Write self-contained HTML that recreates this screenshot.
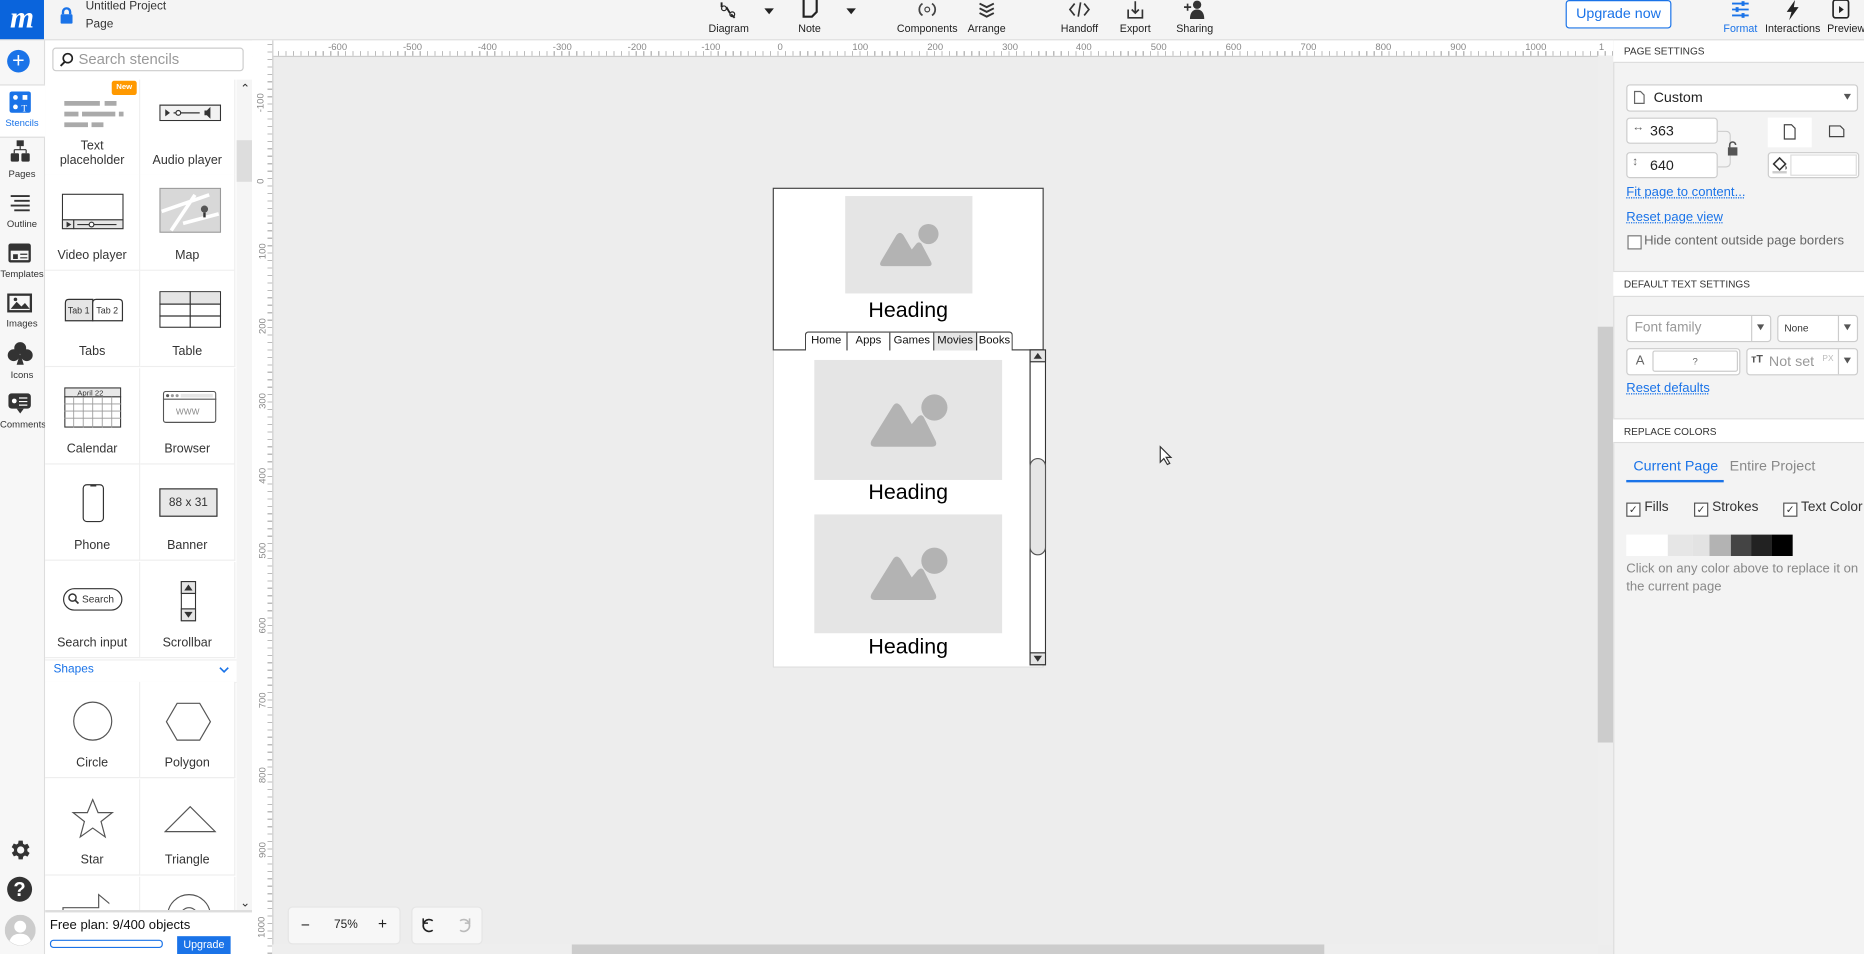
<!DOCTYPE html>
<html><head><meta charset="utf-8"><style>
html,body{margin:0;padding:0;width:1864px;height:954px;overflow:hidden;background:#eee}
#w{position:absolute;left:0;top:0;width:1568px;height:803px;transform:scale(1.18878,1.18804);transform-origin:0 0;font-family:"Liberation Sans",sans-serif;color:#333;overflow:hidden;background:#ededed}
.a{position:absolute}
.lbl{font-size:9px;color:#222;text-align:center;width:80px}
.cell{position:absolute;width:80px;height:81px;background:#fff;border-right:1px solid #eee;border-bottom:1px solid #eee;box-sizing:border-box}
.cell .t{position:absolute;bottom:6px;left:0;right:0;text-align:center;font-size:10.5px;color:#333;line-height:12px}
.rail{position:absolute;left:0;width:37px;text-align:center;font-size:8px;color:#333}
.hd{position:absolute;left:1357px;width:211px;background:#fff;font-size:8.5px;color:#333;padding-left:9px;box-sizing:border-box;border-top:1px solid #ddd;border-bottom:1px solid #ddd}
.in{position:absolute;background:#fff;border:1px solid #ccc;border-radius:3px;box-sizing:border-box;font-size:11px}
.lnk{position:absolute;left:1368px;font-size:11px;color:#1a73e8;text-decoration:underline dotted}
.img{position:absolute;background:#e5e5e5}
.hdg{position:absolute;font-size:18px;color:#000;text-align:center}
</style></head><body><div id="w">

<!-- top bar -->
<div class="a" style="left:0;top:0;width:1568px;height:33px;background:#f4f4f4;border-bottom:1px solid #ddd"></div>
<div class="a" style="left:0;top:0;width:37px;height:33px;background:#0a64dc;color:#fff;font:italic bold 26px 'Liberation Serif',serif;text-align:center;line-height:30px">m</div>
<svg class="a" style="left:50px;top:6px" width="12" height="14" viewBox="0 0 12 14"><rect x="1" y="6" width="10" height="8" rx="1" fill="#1a73e8"/><path d="M3 6V4a3 3 0 0 1 6 0v2" stroke="#1a73e8" stroke-width="2" fill="none"/></svg>
<div class="a" style="left:72px;top:-2px;font-size:10px;color:#333;line-height:15px">Untitled Project<br>Page</div>

<!-- toolbar icons -->
<svg class="a" style="left:603px;top:0" width="22" height="17"><path d="M4 2v4M8 6l3 5M12 12l3 3" stroke="#222" stroke-width="1.6" fill="none"/><circle cx="6" cy="7" r="2" fill="none" stroke="#222"/><circle cx="13" cy="12" r="2" fill="none" stroke="#222"/></svg>
<div class="a lbl" style="left:573px;top:19px">Diagram</div>
<div class="a" style="left:643px;top:7px;border:4px solid transparent;border-top:5px solid #222"></div>
<svg class="a" style="left:674px;top:0" width="16" height="16"><path d="M2 0v14h7l4-4V0" stroke="#222" stroke-width="1.8" fill="none"/></svg>
<div class="a lbl" style="left:641px;top:19px">Note</div>
<div class="a" style="left:712px;top:7px;border:4px solid transparent;border-top:5px solid #222"></div>
<svg class="a" style="left:772px;top:0" width="16" height="16"><path d="M4 3a6 6 0 0 0 0 10M12 3a6 6 0 0 1 0 10" stroke="#444" stroke-width="1.5" fill="none"/><circle cx="8" cy="8" r="2" fill="none" stroke="#444"/></svg>
<div class="a lbl" style="left:740px;top:19px">Components</div>
<svg class="a" style="left:822px;top:0" width="16" height="16"><path d="M2 3l6 3 6-3M2 7l6 3 6-3M2 11l6 3 6-3" stroke="#333" stroke-width="1.6" fill="none"/></svg>
<div class="a lbl" style="left:790px;top:19px">Arrange</div>
<svg class="a" style="left:899px;top:0" width="18" height="16"><path d="M5 3L1 8l4 5M13 3l4 5-4 5M10 2L8 14" stroke="#333" stroke-width="1.4" fill="none"/></svg>
<div class="a lbl" style="left:868px;top:19px">Handoff</div>
<svg class="a" style="left:947px;top:0" width="16" height="16"><path d="M2 8v7h12V8M8 1v10M5 8l3 3 3-3" stroke="#333" stroke-width="1.4" fill="none"/></svg>
<div class="a lbl" style="left:915px;top:19px">Export</div>
<svg class="a" style="left:995px;top:0" width="20" height="16"><circle cx="12" cy="4" r="3.5" fill="#333"/><path d="M6 16c0-6 3-8 6-8s6 2 6 8z" fill="#333"/><path d="M1 6h6M4 3v6" stroke="#333" stroke-width="1.4"/></svg>
<div class="a lbl" style="left:965px;top:19px">Sharing</div>
<div class="a" style="left:1317px;top:0;width:87px;height:22px;border:1px solid #1a73e8;border-radius:3px;background:#fff;color:#1a73e8;font-size:12px;text-align:center;line-height:21px">Upgrade now</div>
<svg class="a" style="left:1456px;top:0" width="16" height="16"><path d="M1 3h14M1 8h14M1 13h14" stroke="#1a73e8" stroke-width="1.5"/><rect x="9" y="1" width="2.5" height="4" fill="#1a73e8"/><rect x="4" y="6" width="2.5" height="4" fill="#1a73e8"/><rect x="9" y="11" width="2.5" height="4" fill="#1a73e8"/></svg>
<div class="a lbl" style="left:1424px;top:19px;color:#1a73e8">Format</div>
<svg class="a" style="left:1501px;top:0" width="14" height="17"><path d="M9 0L2 10h4l-2 7 8-11H8z" fill="#222"/></svg>
<div class="a lbl" style="left:1468px;top:19px">Interactions</div>
<svg class="a" style="left:1541px;top:0" width="16" height="16"><rect x="1" y="0" width="13" height="15" rx="2" fill="none" stroke="#222" stroke-width="1.4"/><path d="M6 5l4 3-4 3z" fill="#222"/></svg>
<div class="a lbl" style="left:1513px;top:19px">Preview</div>

<!-- left rail -->
<div class="a" style="left:0;top:34px;width:37px;height:769px;background:#f7f7f7;border-right:1px solid #ddd"></div>
<div class="a" style="left:6px;top:42px;width:19px;height:19px;border-radius:50%;background:#1a73e8;color:#fff;font-size:18px;line-height:18px;text-align:center">+</div>
<div class="a" style="left:0;top:71px;width:38px;height:43px;background:#fff;border-top:1px solid #ddd;border-bottom:1px solid #ddd"></div>
<svg class="a" style="left:8px;top:77px" width="18" height="18"><rect width="18" height="18" rx="2" fill="#1a73e8"/><circle cx="5" cy="5" r="2" fill="#fff"/><rect x="11" y="3" width="4" height="4" fill="#fff"/><circle cx="5" cy="13" r="2" fill="#fff"/><text x="10" y="17" font-size="8" fill="#fff" font-family="Liberation Serif">T</text></svg>
<div class="rail" style="top:99px;color:#1a73e8">Stencils</div>
<svg class="a" style="left:8px;top:118px" width="18" height="20"><rect x="6" y="0" width="6" height="5" fill="#333"/><path d="M9 5v3M4 8h10M4 8v3M14 8v3" stroke="#333"/><rect x="1" y="11" width="7" height="7" rx="1" fill="#333"/><rect x="10" y="11" width="7" height="7" rx="1" fill="#333"/></svg>
<div class="rail" style="top:142px">Pages</div>
<svg class="a" style="left:8px;top:163px" width="18" height="16"><path d="M1 2h16M4 6h13M1 10h16M4 14h13" stroke="#333" stroke-width="1.6"/></svg>
<div class="rail" style="top:184px">Outline</div>
<svg class="a" style="left:7px;top:205px" width="19" height="16"><rect x="1" y="1" width="17" height="14" rx="1" fill="none" stroke="#333" stroke-width="2"/><rect x="1" y="1" width="17" height="5" fill="#333"/><rect x="4" y="9" width="4" height="4" fill="#333"/><path d="M10 9h6M10 12h6" stroke="#333"/></svg>
<div class="rail" style="top:226px">Templates</div>
<svg class="a" style="left:6px;top:247px" width="21" height="16"><rect x="1" y="1" width="19" height="14" fill="none" stroke="#333" stroke-width="2"/><path d="M3 13l5-6 4 4 3-3 4 5z" fill="#333"/><circle cx="7" cy="5" r="1.5" fill="#333"/></svg>
<div class="rail" style="top:268px">Images</div>
<svg class="a" style="left:6px;top:287px" width="22" height="22"><circle cx="11" cy="6" r="5" fill="#333"/><circle cx="5.5" cy="12" r="5" fill="#333"/><circle cx="16.5" cy="12" r="5" fill="#333"/><path d="M11 10l-3 10h6z" fill="#333"/></svg>
<div class="rail" style="top:311px">Icons</div>
<svg class="a" style="left:7px;top:331px" width="19" height="18"><rect x="0" y="0" width="19" height="13" rx="3" fill="#333"/><path d="M7 13l3 4 3-4z" fill="#333"/><circle cx="5" cy="6.5" r="2" fill="#fff"/><path d="M9 4h7M9 7h7M9 10h7" stroke="#fff"/></svg>
<div class="rail" style="top:353px">Comments</div>
<svg class="a" style="left:6px;top:705px" width="21" height="21" viewBox="0 0 24 24"><path fill="#333" d="M19.4 13a7.5 7.5 0 0 0 0-2l2.1-1.6-2-3.5-2.5 1a7 7 0 0 0-1.7-1L15 3h-4l-.4 2.7a7 7 0 0 0-1.7 1l-2.5-1-2 3.5L6.6 11a7.5 7.5 0 0 0 0 2l-2.1 1.6 2 3.5 2.5-1a7 7 0 0 0 1.7 1L11 21h4l.4-2.7a7 7 0 0 0 1.7-1l2.5 1 2-3.5zM13 15.5a3.5 3.5 0 1 1 0-7 3.5 3.5 0 0 1 0 7z"/></svg>
<div class="a" style="left:6px;top:738px;width:21px;height:21px;border-radius:50%;background:#333;color:#fff;font:bold 17px 'Liberation Sans';text-align:center;line-height:21px">?</div>
<svg class="a" style="left:4px;top:770px" width="26" height="26"><circle cx="13" cy="13" r="13" fill="#ccc"/><circle cx="13" cy="10" r="5" fill="#fff"/><path d="M4 22c2-5 5-6 9-6s7 1 9 6a13 13 0 0 1-18 0z" fill="#fff"/></svg>

<!-- stencil panel -->
<div class="a" style="left:38px;top:34px;width:174px;height:769px;background:#fff"></div>
<div class="a" style="left:44px;top:40px;width:161px;height:20px;border:1px solid #ccc;border-radius:3px;box-sizing:border-box;font-size:12.5px;color:#999;line-height:18px;padding-left:21px">Search stencils</div>
<svg class="a" style="left:50px;top:44px" width="12" height="12"><circle cx="7" cy="5" r="3.8" fill="none" stroke="#222" stroke-width="1.4"/><path d="M4.5 8L1 11.5" stroke="#222" stroke-width="1.6"/></svg>
<div class="a" style="left:199px;top:67px;width:13px;height:700px;background:#f5f5f5"></div>
<div class="a" style="left:199px;top:118px;width:13px;height:35px;background:#ddd"></div>
<div class="a" style="left:202px;top:70px;font-size:10px">&#8963;</div>
<div class="a" style="left:202px;top:755px;font-size:10px">&#8964;</div>

<div class="cell" style="left:38px;top:67px"><div class="t">Text<br>placeholder</div></div>
<div class="a" style="left:94px;top:68px;width:21px;height:12px;background:#f90;border-radius:2px;color:#fff;font-size:6.5px;text-align:center;line-height:12px;font-weight:bold">New</div>
<svg class="a" style="left:54px;top:85px" width="50" height="24"><g fill="#aaa"><rect x="0" y="0" width="30" height="4"/><rect x="34" y="0" width="10" height="4"/><rect x="0" y="9" width="12" height="4"/><rect x="15" y="9" width="28" height="4"/><rect x="46" y="9" width="4" height="4"/><rect x="0" y="18" width="20" height="4"/><rect x="23" y="18" width="10" height="4"/></g></svg>
<div class="cell" style="left:118px;top:67px"><div class="t">Audio player</div></div>
<svg class="a" style="left:134px;top:88px" width="52" height="14"><rect x=".5" y=".5" width="51" height="13" fill="#f2f2f2" stroke="#333"/><path d="M5 4v6l4-3z" fill="#333"/><path d="M12 7h22" stroke="#333"/><circle cx="16" cy="7" r="2" fill="#fff" stroke="#333"/><path d="M38 5h2l3-3v10l-3-3h-2z" fill="#333"/></svg>
<div class="cell" style="left:38px;top:147px"><div class="t">Video player</div></div>
<svg class="a" style="left:52px;top:163px" width="52" height="30"><rect x=".5" y=".5" width="51" height="29" fill="#fff" stroke="#333"/><rect x=".5" y="22" width="51" height="7.5" fill="#e5e5e5" stroke="#333"/><path d="M4 23.5v5l4-2.5z" fill="#333"/><path d="M10 22v8M13 26h33" stroke="#333"/><circle cx="25" cy="26" r="2" fill="#fff" stroke="#333"/></svg>
<div class="cell" style="left:118px;top:147px"><div class="t">Map</div></div>
<svg class="a" style="left:134px;top:158px" width="52" height="38"><rect x=".5" y=".5" width="51" height="37" fill="#d8d8d8" stroke="#999"/><path d="M2 20l40-14M10 36l20-30M20 30l30-8" stroke="#fff" stroke-width="3"/><circle cx="38" cy="18" r="3" fill="#555"/><path d="M38 21v4" stroke="#333" stroke-width="2"/></svg>
<div class="cell" style="left:38px;top:228px"><div class="t">Tabs</div></div>
<svg class="a" style="left:54px;top:251px" width="50" height="20"><path d="M1 19V4q0-3 3-3h20v18z" fill="#e5e5e5" stroke="#333"/><path d="M24 19V4q0-3 3-3h19q3 0 3 3v15z" fill="#fff" stroke="#333"/><text x="3" y="13" font-size="7.5" fill="#333" font-family="Liberation Sans">Tab 1</text><text x="27" y="13" font-size="7.5" fill="#333" font-family="Liberation Sans">Tab 2</text></svg>
<div class="cell" style="left:118px;top:228px"><div class="t">Table</div></div>
<svg class="a" style="left:134px;top:245px" width="52" height="31"><rect x=".5" y=".5" width="51" height="30" fill="#fff" stroke="#333"/><rect x="1" y="1" width="50" height="10" fill="#e5e5e5"/><path d="M0 11h52M0 21h52M26 0v31" stroke="#333"/></svg>
<div class="cell" style="left:38px;top:310px"><div class="t">Calendar</div></div>
<svg class="a" style="left:54px;top:326px" width="48" height="34"><rect x=".5" y=".5" width="47" height="33" fill="#fff" stroke="#333"/><rect x="1" y="1" width="46" height="7" fill="#e8e8e8"/><path d="M0 8h48" stroke="#333"/><path d="M0 14h48M0 20h48M0 26h48M8 8v26M16 8v26M24 8v26M32 8v26M40 8v26" stroke="#999" stroke-width=".7"/><text x="11" y="7" font-size="6.5" fill="#333" font-family="Liberation Sans">April 22</text></svg>
<div class="cell" style="left:118px;top:310px"><div class="t">Browser</div></div>
<svg class="a" style="left:137px;top:329px" width="45" height="27"><rect x=".5" y=".5" width="44" height="26" rx="2" fill="#fff" stroke="#555"/><path d="M0 7h45" stroke="#555"/><circle cx="4" cy="4" r="1.3" fill="#555"/><circle cx="8" cy="4" r="1.3" fill="#999"/><circle cx="12" cy="4" r="1.3" fill="#999"/><rect x="15" y="2.5" width="27" height="3" fill="#e5e5e5"/><text x="11" y="20" font-size="7" fill="#888" font-family="Liberation Sans">WWW</text></svg>
<div class="cell" style="left:38px;top:391px"><div class="t">Phone</div></div>
<svg class="a" style="left:69px;top:407px" width="19" height="33"><rect x="1" y="1" width="17" height="31" rx="3" fill="#fff" stroke="#333"/><rect x="7" y="1" width="5" height="1.5" fill="#333"/></svg>
<div class="cell" style="left:118px;top:391px"><div class="t">Banner</div></div>
<div class="a" style="left:134px;top:411px;width:49px;height:24px;border:1px solid #333;background:#e8e8e8;font-size:10px;text-align:center;line-height:24px;box-sizing:border-box">88 x 31</div>
<div class="cell" style="left:38px;top:473px"><div class="t">Search input</div></div>
<div class="a" style="left:53px;top:495px;width:50px;height:19px;border:1px solid #333;border-radius:10px;box-sizing:border-box;font-size:8.5px;line-height:17px;padding-left:15px">Search</div>
<svg class="a" style="left:57px;top:499px" width="10" height="10"><circle cx="4" cy="4" r="3" fill="none" stroke="#333" stroke-width="1.2"/><path d="M6 6l3 3" stroke="#333" stroke-width="1.4"/></svg>
<div class="cell" style="left:118px;top:473px"><div class="t">Scrollbar</div></div>
<svg class="a" style="left:152px;top:489px" width="13" height="34"><rect x=".5" y=".5" width="12" height="33" fill="#fff" stroke="#333"/><rect x=".5" y=".5" width="12" height="10" fill="#e5e5e5" stroke="#333"/><rect x=".5" y="23.5" width="12" height="10" fill="#e5e5e5" stroke="#333"/><path d="M3 8l3.5-5 3.5 5zM3 26l3.5 5 3.5-5z" fill="#333"/></svg>
<div class="a" style="left:38px;top:555px;width:161px;height:18px;background:#fff;border-bottom:1px solid #eee;border-top:1px solid #eee"></div>
<div class="a" style="left:45px;top:558px;font-size:10px;color:#1a73e8">Shapes</div>
<svg class="a" style="left:184px;top:561px" width="9" height="6"><path d="M1 1l3.5 3.5L8 1" stroke="#1a73e8" stroke-width="1.4" fill="none"/></svg>
<div class="cell" style="left:38px;top:574px"><div class="t">Circle</div></div>
<svg class="a" style="left:61px;top:590px" width="34" height="34"><circle cx="17" cy="17" r="16" fill="none" stroke="#555"/></svg>
<div class="cell" style="left:118px;top:574px"><div class="t">Polygon</div></div>
<svg class="a" style="left:139px;top:591px" width="40" height="33"><path d="M10 1h19l9 15.5-9 15.5H10L1 16.5z" fill="none" stroke="#555"/></svg>
<div class="cell" style="left:118px;top:574px;background:none"></div>
<div class="cell" style="left:38px;top:656px"><div class="t">Star</div></div>
<svg class="a" style="left:60px;top:672px" width="36" height="34"><path d="M18 1l4.5 11h12l-9.5 7.5 3.5 13L18 25l-10.5 7.5 3.5-13L1.5 12h12z" fill="none" stroke="#555"/></svg>
<div class="cell" style="left:118px;top:656px"><div class="t">Triangle</div></div>
<svg class="a" style="left:138px;top:678px" width="44" height="23"><path d="M22 1L1 22h42z" fill="none" stroke="#555"/></svg>
<div class="cell" style="left:38px;top:738px"></div>
<div class="cell" style="left:118px;top:738px"></div>
<svg class="a" style="left:52px;top:752px" width="40" height="16"><path d="M1 16V12h30V1l12 10" fill="none" stroke="#555"/></svg>
<svg class="a" style="left:140px;top:752px" width="40" height="16"><circle cx="19" cy="19" r="18" fill="none" stroke="#555"/><circle cx="19" cy="19" r="7" fill="none" stroke="#555"/></svg>
<div class="a" style="left:38px;top:766px;width:174px;height:37px;background:#fff;border-top:2px solid #ddd"></div>
<div class="a" style="left:42px;top:773px;font-size:11px;color:#111">Free plan: 9/400 objects</div>
<div class="a" style="left:42px;top:791px;width:93px;height:5px;border:1px solid #1a73e8;border-radius:3px"></div>
<div class="a" style="left:149px;top:788px;width:45px;height:15px;background:#1a73e8;color:#fff;font-size:9px;text-align:center;line-height:15px">Upgrade</div>

<!-- rulers -->
<div class="a" style="left:212px;top:34px;width:1145px;height:13px;background:#fff;border-bottom:1px solid #ccc;background-image:repeating-linear-gradient(90deg,#bbb 0 1px,transparent 1px 6.27px);background-size:100% 4px;background-repeat:no-repeat;background-position:3px 9px"></div>
<div class="a" style="left:212px;top:34px;width:17px;height:769px;background:#fff;border-right:1px solid #ccc;background-image:repeating-linear-gradient(180deg,#bbb 0 1px,transparent 1px 6.27px);background-size:4px 100%;background-repeat:no-repeat;background-position:13px 3px"></div>
<div id="rt"></div>

<!-- canvas scrollbars -->
<div class="a" style="left:1344px;top:47px;width:13px;height:748px;background:#eee"></div>
<div class="a" style="left:1344px;top:275px;width:13px;height:350px;background:#ccc"></div>
<div class="a" style="left:229px;top:795px;width:1115px;height:8px;background:#eee"></div>
<div class="a" style="left:481px;top:795px;width:633px;height:8px;background:#ccc"></div>

<!-- wireframe -->
<div class="a" style="left:650px;top:158px;width:228px;height:404px;background:#fff;border:1px solid #ddd;box-sizing:border-box"></div>
<div class="a" style="left:650px;top:158px;width:228px;height:137px;border:1px solid #444;box-sizing:border-box;background:#fff"></div>
<div class="img" style="left:711px;top:165px;width:107px;height:82px"></div>
<svg class="a" style="left:739px;top:186px" width="52" height="40"><circle cx="42" cy="11" r="8.5" fill="#b3b3b3"/><path d="M4 38q-4 0-2-4l13-22q3-4 6 0l7 12 4-5q2-2 4 0l8 15q2 4-2 4z" fill="#b3b3b3"/></svg>
<div class="hdg" style="left:700px;top:251px;width:128px">Heading</div>
<div class="a" style="left:677px;top:279px;width:175px;height:16px;border:1px solid #444;border-bottom:none;border-radius:3px 3px 0 0;box-sizing:border-box;display:flex;font-size:9.5px;color:#111;line-height:14px;background:#fff">
<div style="width:34px;text-align:center;border-right:1px solid #444">Home</div><div style="width:35px;text-align:center;border-right:1px solid #444">Apps</div><div style="width:36px;text-align:center;border-right:1px solid #444">Games</div><div style="width:35px;text-align:center;border-right:1px solid #444;background:#e5e5e5">Movies</div><div style="flex:1;text-align:center">Books</div></div>
<div class="img" style="left:685px;top:303px;width:158px;height:101px"></div>
<svg class="a" style="left:730px;top:331px" width="68" height="46"><circle cx="56" cy="12" r="11" fill="#b3b3b3"/><path d="M6 45q-5 0-3-5l18-29q3-5 7 0l9 15 5-6q3-3 5 0l10 20q2 5-3 5z" fill="#b3b3b3"/></svg>
<div class="hdg" style="left:700px;top:404px;width:128px">Heading</div>
<div class="img" style="left:685px;top:433px;width:158px;height:100px"></div>
<svg class="a" style="left:730px;top:460px" width="68" height="46"><circle cx="56" cy="12" r="11" fill="#b3b3b3"/><path d="M6 45q-5 0-3-5l18-29q3-5 7 0l9 15 5-6q3-3 5 0l10 20q2 5-3 5z" fill="#b3b3b3"/></svg>
<div class="hdg" style="left:700px;top:534px;width:128px">Heading</div>
<svg class="a" style="left:866px;top:294px" width="14" height="267"><rect x=".5" y=".5" width="13" height="265" fill="#fff" stroke="#333"/><rect x=".5" y=".5" width="13" height="10" fill="#e5e5e5" stroke="#333"/><rect x=".5" y="255.5" width="13" height="10" fill="#e5e5e5" stroke="#333"/><path d="M3.5 8l3.5-5 3.5 5zM3.5 258l3.5 5 3.5-5z" fill="#333"/><rect x=".5" y="92" width="13" height="81" rx="6.5" fill="#e5e5e5" stroke="#555"/></svg>
<svg class="a" style="left:975px;top:375px" width="12" height="17"><path d="M1 1v13l3-3 3 5 2-1-3-5h4z" fill="#fff" stroke="#333"/></svg>

<!-- zoom / undo -->
<div class="a" style="left:242px;top:763px;width:95px;height:32px;background:#f7f7f7;border:1px solid #e5e5e5;border-radius:4px;box-sizing:border-box"></div>
<div class="a" style="left:253px;top:771px;font-size:13px;color:#222">−</div>
<div class="a" style="left:281px;top:773px;font-size:10px;color:#222">75%</div>
<div class="a" style="left:318px;top:770px;font-size:13px;color:#222">+</div>
<div class="a" style="left:346px;top:763px;width:60px;height:32px;background:#f7f7f7;border:1px solid #e5e5e5;border-radius:4px;box-sizing:border-box"></div>
<svg class="a" style="left:355px;top:772px" width="12" height="14"><path d="M3 3a5 5 0 1 1 0 8" stroke="#222" stroke-width="1.4" fill="none" transform="scale(-1,1) translate(-12,0)"/><path d="M1 1v4h4" stroke="#222" stroke-width="1.3" fill="none"/></svg>
<svg class="a" style="left:384px;top:772px" width="12" height="14"><path d="M9 3a5 5 0 1 0 0 8" stroke="#bbb" stroke-width="1.4" fill="none" transform="scale(-1,1) translate(-12,0)"/><path d="M11 1v4H7" stroke="#bbb" stroke-width="1.3" fill="none"/></svg>

<!-- right panel -->
<div class="a" style="left:1357px;top:34px;width:211px;height:769px;background:#f3f3f3;border-left:1px solid #ddd"></div>
<div class="hd" style="top:33px;height:20px;line-height:19px">PAGE SETTINGS</div>
<div class="in" style="left:1368px;top:71px;width:195px;height:23px;line-height:21px;padding-left:22px;font-size:12px;color:#222">Custom</div>
<svg class="a" style="left:1374px;top:76px" width="10" height="12"><path d="M1 1h5l3 3v7H1z" fill="none" stroke="#666"/></svg>
<div class="a" style="left:1551px;top:79px;border:3.5px solid transparent;border-top:5px solid #555"></div>
<div class="in" style="left:1368px;top:99px;width:77px;height:22px;line-height:20px;padding-left:19px;font-size:12px;color:#222">363</div>
<div class="a" style="left:1373px;top:102px;font-size:10px;color:#666">↔</div>
<div class="in" style="left:1368px;top:128px;width:77px;height:22px;line-height:20px;padding-left:19px;font-size:12px;color:#222">640</div>
<div class="a" style="left:1373px;top:131px;font-size:10px;color:#666">↕</div>
<div class="a" style="left:1445px;top:110px;width:10px;height:29px;border:1px solid #ccc;border-left:none;border-radius:0 4px 4px 0"></div>
<svg class="a" style="left:1452px;top:118px" width="11" height="13"><path d="M3 6V4a2.5 2.5 0 0 1 5 0" stroke="#555" stroke-width="1.3" fill="none"/><rect x="1.5" y="6" width="8" height="7" fill="#555"/></svg>
<div class="a" style="left:1487px;top:99px;width:37px;height:25px;background:#fff"></div>
<svg class="a" style="left:1500px;top:104px" width="11" height="14"><path d="M1 1h6l3 3v9H1z" fill="none" stroke="#444"/></svg>
<svg class="a" style="left:1538px;top:105px" width="14" height="11"><path d="M1 1h9l3 3v6H1z" fill="none" stroke="#444"/></svg>
<div class="in" style="left:1487px;top:128px;width:77px;height:22px"></div>
<div class="a" style="left:1506px;top:130px;width:56px;height:18px;border:1px solid #ddd;background:#fff;box-sizing:border-box"></div>
<svg class="a" style="left:1490px;top:131px" width="14" height="15"><path d="M2 7l5-5 5 5-5 5z" fill="none" stroke="#333" stroke-width="1.3"/><path d="M12 8q2 3 0 4" fill="#333"/><rect x="1" y="13" width="12" height="2" fill="#ccc"/></svg>
<div class="lnk" style="top:156px">Fit page to content...</div>
<div class="lnk" style="top:177px">Reset page view</div>
<div class="a" style="left:1369px;top:198px;width:10px;height:10px;border:1px solid #777;background:#fff"></div>
<div class="a" style="left:1383px;top:197px;font-size:11px;color:#666">Hide content outside page borders</div>
<div class="hd" style="top:228px;height:22px;line-height:21px">DEFAULT TEXT SETTINGS</div>
<div class="in" style="left:1368px;top:265px;width:122px;height:23px;line-height:21px;padding-left:6px;font-size:11.5px;color:#999">Font family</div>
<div class="a" style="left:1473px;top:266px;width:1px;height:21px;background:#ccc"></div>
<div class="a" style="left:1478px;top:273px;border:3.5px solid transparent;border-top:5px solid #555"></div>
<div class="in" style="left:1495px;top:265px;width:68px;height:23px;line-height:21px;padding-left:5px;font-size:8.5px;color:#333">None</div>
<div class="a" style="left:1546px;top:266px;width:1px;height:21px;background:#ccc"></div>
<div class="a" style="left:1551px;top:273px;border:3.5px solid transparent;border-top:5px solid #555"></div>
<div class="in" style="left:1368px;top:293px;width:96px;height:23px;line-height:21px;padding-left:7px;font-size:11px;color:#666">A</div>
<div class="a" style="left:1390px;top:295px;width:72px;height:18px;border:1px solid #ccc;border-radius:2px;background:#fff;box-sizing:border-box;font-size:8px;text-align:center;line-height:17px;color:#666">?</div>
<div class="in" style="left:1469px;top:293px;width:94px;height:23px;line-height:21px;padding-left:18px;font-size:12px;color:#999">Not set</div>
<div class="a" style="left:1473px;top:297px;font-size:9px;color:#555;font-weight:bold">ᴛT</div>
<div class="a" style="left:1533px;top:299px;font-size:7px;color:#bbb">PX</div>
<div class="a" style="left:1546px;top:294px;width:1px;height:21px;background:#ccc"></div>
<div class="a" style="left:1551px;top:301px;border:3.5px solid transparent;border-top:5px solid #555"></div>
<div class="lnk" style="top:321px">Reset defaults</div>
<div class="hd" style="top:352px;height:21px;line-height:20px">REPLACE COLORS</div>
<div class="a" style="left:1374px;top:385px;font-size:12px;color:#1a73e8">Current Page</div>
<div class="a" style="left:1455px;top:385px;font-size:12px;color:#888">Entire Project</div>
<div class="a" style="left:1368px;top:404px;width:82px;height:2px;background:#1a73e8"></div>
<div class="a" style="left:1368px;top:421px;font-size:11.5px;color:#333;white-space:nowrap">
<span style="display:inline-block;width:10px;height:10px;border:1px solid #555;background:#fff;vertical-align:-2px;font-size:9px;line-height:10px;text-align:center">✓</span> Fills</div>
<div class="a" style="left:1425px;top:421px;font-size:11.5px;color:#333;white-space:nowrap"><span style="display:inline-block;width:10px;height:10px;border:1px solid #555;background:#fff;vertical-align:-2px;font-size:9px;line-height:10px;text-align:center">✓</span> Strokes</div>
<div class="a" style="left:1500px;top:421px;font-size:11.5px;color:#333;white-space:nowrap"><span style="display:inline-block;width:10px;height:10px;border:1px solid #555;background:#fff;vertical-align:-2px;font-size:9px;line-height:10px;text-align:center">✓</span> Text Color</div>
<div class="a" style="left:1368px;top:450px;width:35px;height:18px;background:#fff"></div>
<div class="a" style="left:1403px;top:450px;width:21px;height:18px;background:#e6e6e6"></div>
<div class="a" style="left:1424px;top:450px;width:14px;height:18px;background:#e3e3e3"></div>
<div class="a" style="left:1438px;top:450px;width:18px;height:18px;background:#b3b3b3"></div>
<div class="a" style="left:1456px;top:450px;width:17px;height:18px;background:#444"></div>
<div class="a" style="left:1473px;top:450px;width:17px;height:18px;background:#222"></div>
<div class="a" style="left:1490px;top:450px;width:18px;height:18px;background:#000"></div>
<div class="a" style="left:1368px;top:472px;width:200px;font-size:11px;color:#888;line-height:15px">Click on any color above to replace it on the current page</div>

<!-- ruler labels -->
<div class="a" style="left:0;top:0;font-size:8px;color:#888">
<span class="a" style="left:276px;top:35px">-600</span><span class="a" style="left:339px;top:35px">-500</span><span class="a" style="left:402px;top:35px">-400</span><span class="a" style="left:465px;top:35px">-300</span><span class="a" style="left:528px;top:35px">-200</span><span class="a" style="left:590px;top:35px">-100</span><span class="a" style="left:654px;top:35px">0</span><span class="a" style="left:717px;top:35px">100</span><span class="a" style="left:780px;top:35px">200</span><span class="a" style="left:843px;top:35px">300</span><span class="a" style="left:905px;top:35px">400</span><span class="a" style="left:968px;top:35px">500</span><span class="a" style="left:1031px;top:35px">600</span><span class="a" style="left:1094px;top:35px">700</span><span class="a" style="left:1157px;top:35px">800</span><span class="a" style="left:1220px;top:35px">900</span><span class="a" style="left:1283px;top:35px">1000</span><span class="a" style="left:1345px;top:35px">1</span>
</div>
<div class="a" style="left:0;top:0;font-size:8px;color:#888">
<span class="a" style="left:211px;top:82px;transform:rotate(-90deg)">-100</span><span class="a" style="left:217px;top:148px;transform:rotate(-90deg)">0</span><span class="a" style="left:214px;top:207px;transform:rotate(-90deg)">100</span><span class="a" style="left:214px;top:270px;transform:rotate(-90deg)">200</span><span class="a" style="left:214px;top:333px;transform:rotate(-90deg)">300</span><span class="a" style="left:214px;top:396px;transform:rotate(-90deg)">400</span><span class="a" style="left:214px;top:459px;transform:rotate(-90deg)">500</span><span class="a" style="left:214px;top:522px;transform:rotate(-90deg)">600</span><span class="a" style="left:214px;top:585px;transform:rotate(-90deg)">700</span><span class="a" style="left:214px;top:648px;transform:rotate(-90deg)">800</span><span class="a" style="left:214px;top:711px;transform:rotate(-90deg)">900</span><span class="a" style="left:211px;top:776px;transform:rotate(-90deg)">1000</span>
</div>
</div></body></html>
